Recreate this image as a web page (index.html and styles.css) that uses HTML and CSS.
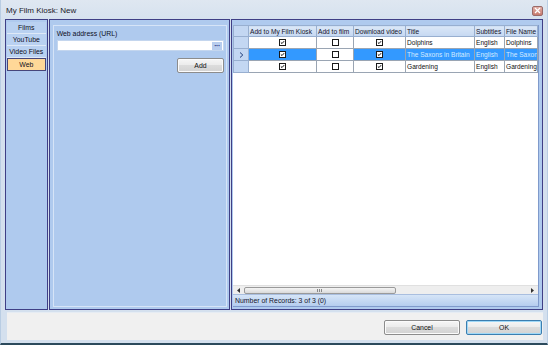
FILE: index.html
```html
<!DOCTYPE html>
<html>
<head>
<meta charset="utf-8">
<title>My Film Kiosk: New</title>
<link rel="stylesheet" href="styles.css">
</head>
<body>
<div class="window">
  <div class="titlebar">
    <span class="title">My Film Kiosk: New</span>
    <span class="close"><svg width="7" height="7" viewBox="0 0 7 7"><path d="M1 1L6 6M6 1L1 6" stroke="#fff" stroke-width="1.3"/></svg></span>
  </div>
  <div class="main">
    <div class="nav">
      <div class="tab">Films</div>
      <div class="tab">YouTube</div>
      <div class="tab">Video Files</div>
      <div class="tab active">Web</div>
    </div>
    <div class="middle">
      <div class="group">
        <div class="lbl">Web address (URL)</div>
        <div class="input"><span class="dots">···</span></div>
        <div class="addrow"><button class="btn add">Add</button></div>
      </div>
    </div>
    <div class="right">
      <div class="gridbox">
        <div class="gridarea">
          <table class="grid">
            <colgroup>
              <col class="c0"><col class="c1"><col class="c2"><col class="c3"><col class="c4"><col class="c5"><col class="c6">
            </colgroup>
            <thead>
              <tr><th class="rh"></th><th>Add to My Film Kiosk</th><th>Add to film</th><th>Download video</th><th>Title</th><th>Subtitles</th><th>File Name</th></tr>
            </thead>
            <tbody>
              <tr>
                <td class="rh"></td>
                <td class="ck"><span class="cb"><svg viewBox="0 0 7 7"><path d="M1.2 3.4L2.8 5L5.8 1.6" fill="none" stroke="#000" stroke-width="1.3"/></svg></span></td>
                <td class="ck"><span class="cb"></span></td>
                <td class="ck"><span class="cb"><svg viewBox="0 0 7 7"><path d="M1.2 3.4L2.8 5L5.8 1.6" fill="none" stroke="#000" stroke-width="1.3"/></svg></span></td>
                <td>Dolphins</td><td>English</td><td>Dolphins</td>
              </tr>
              <tr class="sel">
                <td class="rh"><svg width="5" height="6" viewBox="0 0 5 6"><path d="M1 0.5L3.8 3L1 5.5" fill="none" stroke="#1f3d7a" stroke-width="1"/></svg></td>
                <td class="ck"><span class="cb"><svg viewBox="0 0 7 7"><path d="M1.2 3.4L2.8 5L5.8 1.6" fill="none" stroke="#000" stroke-width="1.3"/></svg></span></td>
                <td class="ck cur"><span class="cb"></span></td>
                <td class="ck"><span class="cb"><svg viewBox="0 0 7 7"><path d="M1.2 3.4L2.8 5L5.8 1.6" fill="none" stroke="#000" stroke-width="1.3"/></svg></span></td>
                <td>The Saxons in Britain</td><td>English</td><td>The Saxons in Britain</td>
              </tr>
              <tr>
                <td class="rh"></td>
                <td class="ck"><span class="cb"><svg viewBox="0 0 7 7"><path d="M1.2 3.4L2.8 5L5.8 1.6" fill="none" stroke="#000" stroke-width="1.3"/></svg></span></td>
                <td class="ck"><span class="cb"></span></td>
                <td class="ck"><span class="cb"><svg viewBox="0 0 7 7"><path d="M1.2 3.4L2.8 5L5.8 1.6" fill="none" stroke="#000" stroke-width="1.3"/></svg></span></td>
                <td>Gardening</td><td>English</td><td>Gardening</td>
              </tr>
            </tbody>
          </table>
        </div>
        <div class="hscroll">
          <span class="arrow"><svg width="3" height="5" viewBox="0 0 3 5"><path d="M3 0L0 2.5L3 5Z" fill="#333"/></svg></span>
          <div class="track">
            <div class="thumb"><span class="grip"></span></div>
          </div>
          <span class="arrow"><svg width="3" height="5" viewBox="0 0 3 5"><path d="M0 0L3 2.5L0 5Z" fill="#333"/></svg></span>
        </div>
        <div class="status">Number of Records: 3 of 3 (0)</div>
      </div>
    </div>
  </div>
  <div class="footer">
    <button class="btn">Cancel</button>
    <button class="btn ok">OK</button>
  </div>
</div>
</body>
</html>
```
FILE: styles.css
```css
* { box-sizing: border-box; }
html, body { margin: 0; padding: 0; }
body {
  width: 548px;
  height: 345px;
  overflow: hidden;
  background: #d4e0ee;
  font-family: "Liberation Sans", Arial, sans-serif;
  font-size: 6.9px;
  color: #000;
}
.window {
  height: 345px;
  display: flex;
  flex-direction: column;
  border-bottom: 2px solid #2c4a5c;
  border-left: 1px solid #b9cde3;
  border-right: 1px solid #b9cde3;
}
.titlebar {
  height: 19px;
  flex: none;
  display: flex;
  align-items: center;
  justify-content: space-between;
  padding: 0 4px 0 5px;
  background: linear-gradient(#dfe7f1, #d6e2ef);
}
.title {
  font-size: 8px;
  color: #1b1b2b;
  margin-top: 1px;
}
.close {
  width: 11px;
  height: 10px;
  margin-top: 2px;
  border: 1px solid #9a6a68;
  border-radius: 2px;
  background: linear-gradient(#e2aea6, #c77a6e);
  display: flex;
  align-items: center;
  justify-content: center;
}
.main {
  height: 291px;
  flex: none;
  display: flex;
  gap: 1px;
  padding: 0 4px;
}
.nav {
  width: 43px;
  border: 1px solid #3f3f86;
  background: #afcaee;
  padding: 2px 1px 0 1px;
  display: flex;
  flex-direction: column;
}
.tab {
  height: 12px;
  border-bottom: 1px solid #dfe9f7;
  background: #b9d1f1;
  display: flex;
  align-items: center;
  justify-content: center;
  color: #0f0f20;
}
.tab.active {
  height: 13px;
  background: #ffd898;
  border: 1px solid #46467a;
}
.middle {
  width: 183px;
  border: 1px solid #3f3f86;
  background: #afcaee;
  padding: 5px 2px 2px 3px;
  display: flex;
}
.group {
  flex: 1;
  border: 1px solid #d6e4f7;
  padding: 3px 2px 0 3px;
  display: flex;
  flex-direction: column;
}
.lbl {
  height: 9px;
  line-height: 9px;
  color: #0e0e1e;
}
.input {
  margin-top: 2px;
  height: 11px;
  background: #fff;
  border: 1px solid #c4d6ee;
  display: flex;
  justify-content: flex-end;
  align-items: center;
  padding-right: 1px;
}
.dots {
  width: 10px;
  height: 8px;
  background: #b8cdee;
  color: #1d2f7a;
  font-size: 7px;
  line-height: 7px;
  text-align: center;
  font-weight: bold;
  letter-spacing: -0.5px;
}
.addrow {
  display: flex;
  justify-content: flex-end;
  margin-top: 7px;
}
.btn {
  font-family: "Liberation Sans", Arial, sans-serif;
  font-size: 6.9px;
  color: #111;
  height: 15px;
  padding: 0;
  border: 1px solid #8c8c8c;
  border-radius: 2px;
  background: linear-gradient(#f6f6f6 0%, #ececec 45%, #dcdcdc 50%, #d2d2d2 100%);
  box-shadow: inset 0 0 0 1px #fbfbfb;
}
.btn.add {
  width: 47px;
}
.right {
  flex: 1;
  border: 1px solid #3f3f86;
  background: #afcaee;
  padding: 5px 3px 2px 1px;
  display: flex;
}
.gridbox {
  flex: 1;
  display: flex;
  flex-direction: column;
  border: 1px solid #7f9acb;
  border-top: 0;
  border-left: 0;
}
.gridarea {
  flex: 1;
  background: #fff;
  overflow: hidden;
}
.grid {
  border-collapse: collapse;
  table-layout: fixed;
  width: 304px;
}
.c0 { width: 15px; }
.c1 { width: 68px; }
.c2 { width: 37px; }
.c3 { width: 52px; }
.c4 { width: 69px; }
.c5 { width: 30px; }
.c6 { width: 33px; }
.grid th, .grid td {
  height: 12px;
  padding: 0 0 0 1px;
  border: 1px solid #9aa5b3;
  white-space: nowrap;
  overflow: hidden;
  text-align: left;
  font-weight: normal;
  font-size: 6.6px;
  color: #111;
}
.grid th {
  height: 11px;
  background: linear-gradient(#dbe7f7, #c5d8f2);
  border-color: #98afd0;
  color: #14142a;
}
.grid .rh {
  background: #c3d7f2;
  border-color: #98afd0;
  padding: 0 0 0 5px;
}
.grid .rh svg { display: block; }
.grid td.ck {
  text-align: center;
  padding: 0;
}
.cb {
  display: inline-block;
  width: 7px;
  height: 7px;
  border: 1px solid #1a1a1a;
  background: #fff;
  vertical-align: middle;
  position: relative;
  top: -0.5px;
}
.cb svg {
  display: block;
  width: 5px;
  height: 5px;
}
.sel td {
  background: #3399ff;
  color: #d4ebff;
}
.sel td.cur {
  background: #ffffff;
}
.sel td.rh {
  background: #c3d7f2;
}
.hscroll {
  height: 9px;
  flex: none;
  display: flex;
  align-items: center;
  background: #eeeeee;
  border-top: 1px solid #e0e0e0;
}
.arrow {
  width: 11px;
  display: flex;
  justify-content: center;
}
.track {
  flex: 1;
  height: 8px;
  display: flex;
  align-items: center;
}
.thumb {
  width: 152px;
  height: 7px;
  border: 1px solid #9a9a9a;
  border-radius: 2px;
  background: linear-gradient(#f4f4f4, #dadada);
  display: flex;
  align-items: center;
  justify-content: center;
}
.grip {
  width: 6px;
  height: 3px;
  background: repeating-linear-gradient(90deg, #888 0 1px, transparent 1px 2px);
}
.status {
  height: 12px;
  flex: none;
  line-height: 12px;
  padding-left: 2px;
  background: linear-gradient(#d6e5f7, #b5cdef);
  border-top: 1px solid #a9bedf;
  color: #15152a;
}
.footer {
  flex: 1;
  margin: 2px 4px 3px 6px;
  background: #f0f0f0;
  border-top: 1px solid #e6ecf3;
  display: flex;
  justify-content: flex-end;
  align-items: center;
  gap: 6px;
  padding: 2px 1px 0 0;
}
.footer .btn {
  width: 76px;
}
.btn.ok {
  border-color: #3b7eb0;
  box-shadow: inset 0 0 0 1px #9fd8f7;
}
```
